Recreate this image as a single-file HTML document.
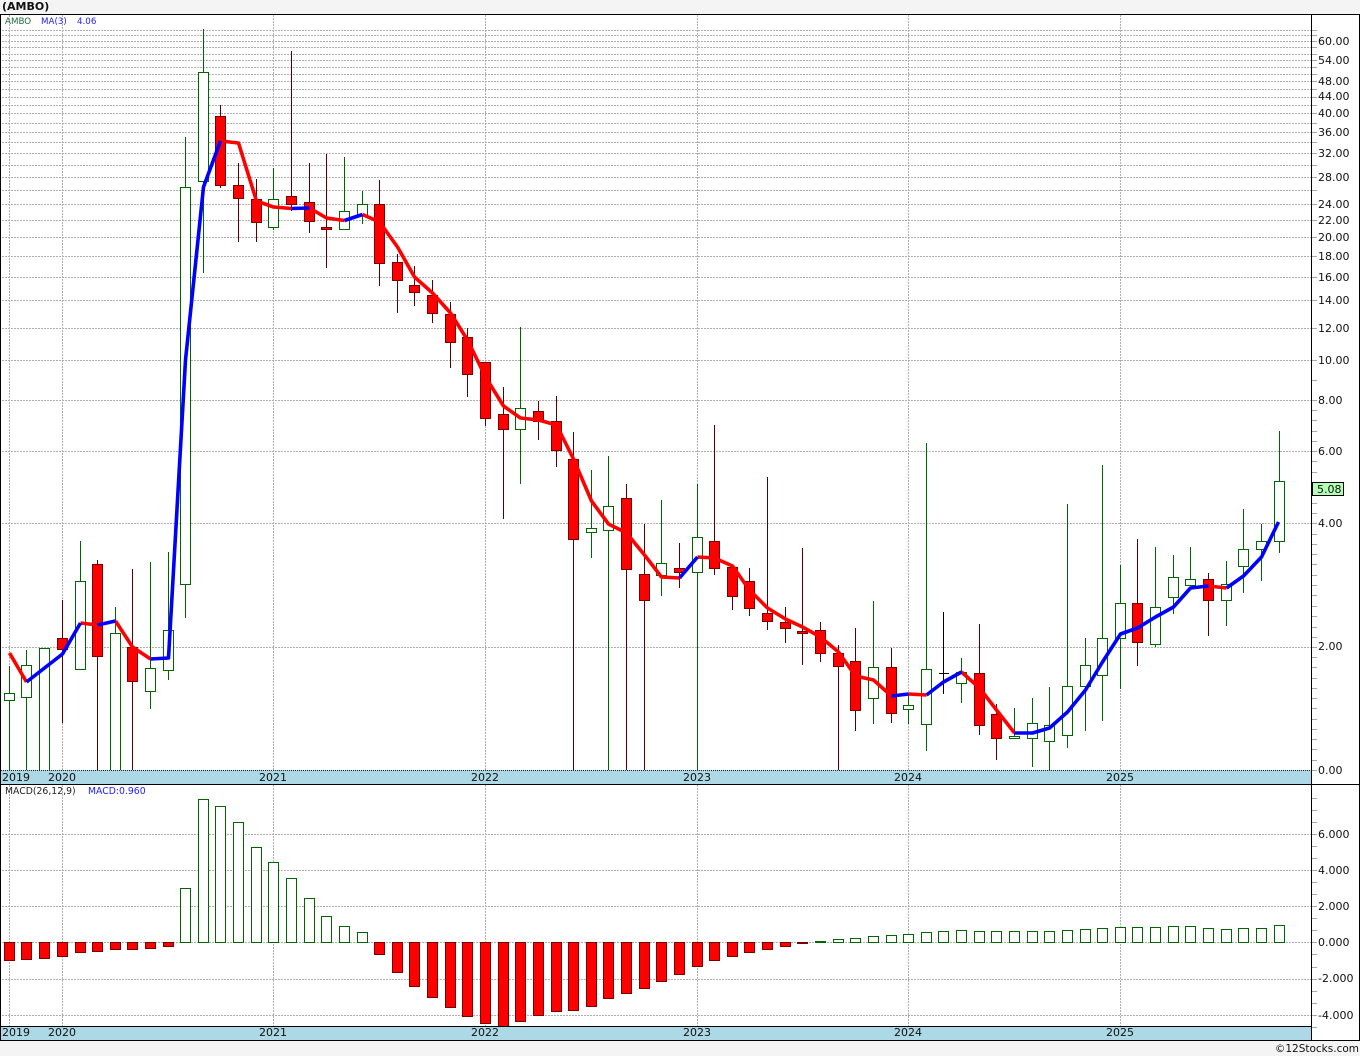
<!DOCTYPE html>
<html lang="en">
<head>
<meta charset="utf-8">
<title>(AMBO)</title>
<style>
html,body{margin:0;padding:0;background:#f4f4f4;width:1360px;height:1056px;overflow:hidden}
svg{display:block}
text{font-family:"DejaVu Sans","Liberation Sans",sans-serif;font-size:11px;fill:#111}
.s{font-size:8.7px}
.m{font-size:9.3px}
</style>
</head>
<body>
<svg width="1360" height="1056" viewBox="0 0 1360 1056" xmlns="http://www.w3.org/2000/svg">
<rect x="0" y="0" width="1360" height="1056" fill="#f4f4f4"/>
<rect x="0" y="14" width="1360" height="1027" fill="#fff"/>
<g shape-rendering="crispEdges" fill="none">
<path stroke="#aeaeae" stroke-dasharray="2 1" d="M2 30.5H1311M2 35.5H1311M2 41.5H1311M2 47.5H1311M2 54.5H1311M2 60.5H1311M2 67.5H1311M2 74.5H1311M2 81.5H1311M2 89.5H1311M2 97.5H1311M2 105.5H1311M2 113.5H1311M2 123.5H1311M2 132.5H1311M2 142.5H1311M2 153.5H1311M2 165.5H1311M2 177.5H1311M2 190.5H1311M2 204.5H1311M2 220.5H1311M2 237.5H1311M2 256.5H1311M2 277.5H1311M2 300.5H1311M2 328.5H1311M2 360.5H1311M2 400.5H1311M2 451.5H1311M2 523.5H1311M2 647.5H1311M2 834.5H1311M2 870.5H1311M2 906.5H1311M2 942.5H1311M2 979.5H1311M2 1015.5H1311M9.5 15V770M62.5 15V770M273.5 15V770M485.5 15V770M697.5 15V770M908.5 15V770M1120.5 15V770M9.5 785V1026M62.5 785V1026M273.5 785V1026M485.5 785V1026M697.5 785V1026M908.5 785V1026M1120.5 785V1026"/>
<path stroke="#a6a6a6" d="M1312 30.5h5M1312 35.5h5M1312 41.5h5M1312 47.5h5M1312 54.5h5M1312 60.5h5M1312 67.5h5M1312 74.5h5M1312 81.5h5M1312 89.5h5M1312 97.5h5M1312 105.5h5M1312 113.5h5M1312 123.5h5M1312 132.5h5M1312 142.5h5M1312 153.5h5M1312 165.5h5M1312 177.5h5M1312 190.5h5M1312 204.5h5M1312 220.5h5M1312 237.5h5M1312 256.5h5M1312 277.5h5M1312 300.5h5M1312 328.5h5M1312 360.5h5M1312 380.5h5M1312 400.5h5M1312 410.5h5M1312 420.5h5M1312 431.5h5M1312 441.5h5M1312 451.5h5M1312 461.5h5M1312 472.5h5M1312 503.5h5M1312 513.5h5M1312 523.5h5M1312 534.5h5M1312 544.5h5M1312 554.5h5M1312 564.5h5M1312 575.5h5M1312 585.5h5M1312 595.5h5M1312 606.5h5M1312 616.5h5M1312 627.5h5M1312 637.5h5M1312 647.5h5M1312 657.5h5M1312 667.5h5M1312 678.5h5M1312 688.5h5M1312 698.5h5M1312 708.5h5M1312 719.5h5M1312 729.5h5M1312 739.5h5M1312 749.5h5M1312 760.5h5M1312 770.5h5M1312 798.5h5M1312 810.5h5M1312 822.5h5M1312 834.5h5M1312 846.5h5M1312 858.5h5M1312 870.5h5M1312 882.5h5M1312 894.5h5M1312 906.5h5M1312 918.5h5M1312 930.5h5M1312 942.5h5M1312 954.5h5M1312 967.5h5M1312 979.5h5M1312 991.5h5M1312 1003.5h5M1312 1015.5h5M1312 1027.5h5"/>
<!-- green wicks -->
<path stroke="#006400" d="M9.5 666V770M26.5 650V770M44.5 648V770M80.5 541V669M115.5 607V770M150.5 562V709M168.5 552V680M185.5 137V618M203.5 29V273M273.5 168V230M344.5 157V229M362.5 191V224M520.5 327V484M591.5 470V558M608.5 456V770M661.5 500V596M697.5 484V770M873.5 601V724M908.5 693V724M926.5 443V751M961.5 658V703M1014.5 708V738M1032.5 698V767M1049.5 687V770M1067.5 504V748M1085.5 638V731M1102.5 465V721M1120.5 565V689M1155.5 547V647M1173.5 555V614M1190.5 547V585M1226.5 561V626M1243.5 509V593M1261.5 524V581M1279.5 431V553"/>
<!-- red wicks -->
<path stroke="#5a0000" d="M62.5 600V723M97.5 560V770M132.5 569V770M220.5 105V188M238.5 163V242M256.5 179V242M291.5 51V211M309.5 163V233M326.5 154V268M379.5 180V286M397.5 254V313M414.5 266V306M432.5 280V323M450.5 302V368M467.5 328V397M485.5 362V426M503.5 387V519M538.5 401V440M556.5 396V467M573.5 432V770M626.5 484V770M644.5 524V770M679.5 543V588M714.5 425V575M732.5 567V610M749.5 568V616M767.5 477V630M785.5 607V643M802.5 548V665M820.5 622V662M838.5 645V770M855.5 628V731M891.5 648V723M979.5 624V735M996.5 704V760M1137.5 539V666M1208.5 573V636"/>
<path stroke="#000" d="M943.5 612V694M939 673.5h10"/>
<!-- green bodies -->
<path stroke="#006400" fill="#fff" d="M4.5 693.5h10v7h-10zM21.5 665.5h10v32h-10zM39.5 648.5h10v130h-10zM75.5 581.5h10v88h-10zM110.5 633.5h10v145h-10zM145.5 668.5h10v23h-10zM163.5 630.5h10v40h-10zM180.5 187.5h10v397h-10zM198.5 72.5h10v109h-10zM268.5 199.5h10v28h-10zM339.5 211.5h10v18h-10zM357.5 204.5h10v11h-10zM515.5 408.5h10v21h-10zM586.5 528.5h10v4h-10zM603.5 506.5h10v24h-10zM656.5 563.5h10v12h-10zM692.5 537.5h10v35h-10zM868.5 667.5h10v31h-10zM903.5 705.5h10v4h-10zM921.5 669.5h10v55h-10zM956.5 672.5h10v11h-10zM1009.5 736.5h10v2h-10zM1027.5 723.5h10v15h-10zM1044.5 725.5h10v16h-10zM1062.5 686.5h10v49h-10zM1080.5 665.5h10v21h-10zM1097.5 638.5h10v37h-10zM1115.5 603.5h10v35h-10zM1150.5 607.5h10v37h-10zM1168.5 577.5h10v20h-10zM1185.5 579.5h10v6h-10zM1221.5 584.5h10v16h-10zM1238.5 549.5h10v17h-10zM1256.5 541.5h10v8h-10zM1274.5 481.5h10v60h-10z"/>
<!-- red bodies -->
<path stroke="#7a0000" fill="#f00" d="M57.5 638.5h10v11h-10zM92.5 564.5h10v92h-10zM127.5 647.5h10v34h-10zM215.5 116.5h10v69h-10zM233.5 185.5h10v13h-10zM251.5 199.5h10v23h-10zM286.5 196.5h10v8h-10zM304.5 202.5h10v19h-10zM321.5 227.5h10v2h-10zM374.5 204.5h10v59h-10zM392.5 262.5h10v18h-10zM409.5 285.5h10v7h-10zM427.5 295.5h10v18h-10zM445.5 314.5h10v28h-10zM462.5 337.5h10v37h-10zM480.5 362.5h10v56h-10zM498.5 414.5h10v15h-10zM533.5 411.5h10v10h-10zM551.5 421.5h10v29h-10zM568.5 459.5h10v80h-10zM621.5 498.5h10v71h-10zM639.5 574.5h10v26h-10zM674.5 568.5h10v4h-10zM709.5 541.5h10v27h-10zM727.5 567.5h10v29h-10zM744.5 581.5h10v27h-10zM762.5 613.5h10v8h-10zM780.5 622.5h10v6h-10zM797.5 631.5h10v2h-10zM815.5 630.5h10v23h-10zM833.5 653.5h10v13h-10zM850.5 661.5h10v49h-10zM886.5 667.5h10v46h-10zM974.5 673.5h10v52h-10zM991.5 714.5h10v24h-10zM1132.5 603.5h10v39h-10zM1203.5 579.5h10v21h-10z"/>
<!-- MACD green -->
<path stroke="#006400" fill="#fff" d="M180.5 888.5h10v54h-10zM198.5 799.5h10v143h-10zM215.5 806.5h10v136h-10zM233.5 822.5h10v120h-10zM251.5 847.5h10v95h-10zM268.5 862.5h10v80h-10zM286.5 878.5h10v64h-10zM304.5 898.5h10v44h-10zM321.5 916.5h10v26h-10zM339.5 926.5h10v16h-10zM357.5 932.5h10v10h-10zM815.5 941.5h10v1h-10zM833.5 939.5h10v3h-10zM850.5 938.5h10v4h-10zM868.5 936.5h10v6h-10zM886.5 935.5h10v7h-10zM903.5 934.5h10v8h-10zM921.5 932.5h10v10h-10zM938.5 931.5h10v11h-10zM956.5 930.5h10v12h-10zM974.5 931.5h10v11h-10zM991.5 931.5h10v11h-10zM1009.5 931.5h10v11h-10zM1027.5 931.5h10v11h-10zM1044.5 931.5h10v11h-10zM1062.5 930.5h10v12h-10zM1080.5 929.5h10v13h-10zM1097.5 928.5h10v14h-10zM1115.5 927.5h10v15h-10zM1132.5 927.5h10v15h-10zM1150.5 927.5h10v15h-10zM1168.5 926.5h10v16h-10zM1185.5 926.5h10v16h-10zM1203.5 928.5h10v14h-10zM1221.5 929.5h10v13h-10zM1238.5 928.5h10v14h-10zM1256.5 928.5h10v14h-10zM1274.5 925.5h10v17h-10z"/>
<!-- MACD red -->
<path stroke="#7a0000" fill="#f00" d="M4.5 942.5h10v18h-10zM21.5 942.5h10v17h-10zM39.5 942.5h10v16h-10zM57.5 942.5h10v14h-10zM75.5 942.5h10v10h-10zM92.5 942.5h10v9h-10zM110.5 942.5h10v7h-10zM127.5 942.5h10v7h-10zM145.5 942.5h10v6h-10zM163.5 942.5h10v4h-10zM374.5 942.5h10v12h-10zM392.5 942.5h10v30h-10zM409.5 942.5h10v44h-10zM427.5 942.5h10v55h-10zM445.5 942.5h10v65h-10zM462.5 942.5h10v74h-10zM480.5 942.5h10v81h-10zM498.5 942.5h10v85h-10zM515.5 942.5h10v79h-10zM533.5 942.5h10v73h-10zM551.5 942.5h10v69h-10zM568.5 942.5h10v68h-10zM586.5 942.5h10v64h-10zM603.5 942.5h10v56h-10zM621.5 942.5h10v51h-10zM639.5 942.5h10v46h-10zM656.5 942.5h10v39h-10zM674.5 942.5h10v32h-10zM692.5 942.5h10v24h-10zM709.5 942.5h10v18h-10zM727.5 942.5h10v14h-10zM744.5 942.5h10v10h-10zM762.5 942.5h10v7h-10zM780.5 942.5h10v4h-10zM797.5 942.5h10v1h-10z"/>
</g>
<!-- MA(3) line -->
<g fill="none" stroke-width="3.6" stroke-linejoin="round" stroke-linecap="butt">
<g stroke="#f00">
<polyline points="9.5,653 26.5,682"/>
<polyline points="80.5,623 97.5,625"/>
<polyline points="115.5,621 132.5,647 150.5,659"/>
<polyline points="220.5,141 238.5,143 256.5,201 273.5,207 291.5,208.5"/>
<polyline points="309.5,208 326.5,218 344.5,220.5"/>
<polyline points="362.5,214.5 379.5,222 397.5,247 414.5,277 432.5,293 450.5,313 467.5,340 485.5,377 503.5,406 520.5,418 538.5,420 556.5,425 573.5,459 591.5,501 608.5,524 626.5,533 644.5,555 661.5,577 679.5,578"/>
<polyline points="697.5,557 714.5,558 732.5,566 749.5,590 767.5,608 785.5,619 802.5,627 820.5,637 838.5,652 855.5,676 873.5,680 891.5,696"/>
<polyline points="908.5,694 926.5,695"/>
<polyline points="961.5,672 979.5,688 996.5,710 1014.5,733"/>
<polyline points="1208.5,586 1226.5,588"/>
</g>
<g stroke="#00f">
<polyline points="26.5,682 44.5,668 62.5,654 80.5,623"/>
<polyline points="97.5,625 115.5,621"/>
<polyline points="150.5,659 168.5,658 185.5,360 203.5,187 220.5,141"/>
<polyline points="291.5,208.5 309.5,208"/>
<polyline points="344.5,220.5 362.5,214.5"/>
<polyline points="679.5,578 697.5,557"/>
<polyline points="891.5,696 908.5,694"/>
<polyline points="926.5,695 943.5,682 961.5,672"/>
<polyline points="1014.5,733 1032.5,733 1049.5,728 1067.5,712 1085.5,690 1102.5,662 1120.5,634 1137.5,628 1155.5,617 1173.5,607 1190.5,588 1208.5,586"/>
<polyline points="1226.5,588 1243.5,576 1261.5,557 1278.5,522"/>
</g>
</g>
<!-- date bars and frame -->
<g shape-rendering="crispEdges">
<rect x="1" y="770" width="1310" height="14" fill="#add8e6"/>
<rect x="1" y="1026" width="1310" height="14" fill="#add8e6"/>
<path stroke="#222" stroke-dasharray="1 1" fill="none" d="M1 770.5H1311"/>
<rect x="0" y="14" width="1360" height="1" fill="#000"/>
<rect x="0" y="14" width="1" height="1027" fill="#000"/>
<rect x="1359" y="14" width="1" height="1027" fill="#000"/>
<rect x="1311" y="14" width="1" height="1027" fill="#000"/>
<rect x="0" y="784" width="1360" height="1" fill="#000"/>
<rect x="0" y="1026" width="1312" height="1" fill="#000"/>
<rect x="0" y="1040" width="1360" height="1" fill="#000"/>
<rect x="1312.5" y="482.5" width="31" height="13" fill="#b4ffb4" stroke="#000"/>
</g>
<!-- text -->
<text x="2" y="10" style="font-weight:bold;font-size:11px">(AMBO)</text>
<text class="s" x="5" y="24" style="fill:#1e6b3c">AMBO</text>
<text class="s" x="41" y="24" style="fill:#2020ff">MA(3)</text>
<text class="s" x="77" y="24" style="fill:#2020ff">4.06</text>
<text class="m" x="5" y="794" style="fill:#222">MACD(26,12,9)</text>
<text class="m" x="88" y="794" style="fill:#2020ff">MACD:0.960</text>

<text x="1318" y="45">60.00</text>
<text x="1318" y="64">54.00</text>
<text x="1318" y="85">48.00</text>
<text x="1318" y="100">44.00</text>
<text x="1318" y="117">40.00</text>
<text x="1318" y="136">36.00</text>
<text x="1318" y="157">32.00</text>
<text x="1318" y="181">28.00</text>
<text x="1318" y="208">24.00</text>
<text x="1318" y="224">22.00</text>
<text x="1318" y="241">20.00</text>
<text x="1318" y="260">18.00</text>
<text x="1318" y="281">16.00</text>
<text x="1318" y="304">14.00</text>
<text x="1318" y="332">12.00</text>
<text x="1318" y="364">10.00</text>
<text x="1318" y="404">8.00</text>
<text x="1318" y="455">6.00</text>
<text x="1317" y="493">5.08</text>
<text x="1318" y="527">4.00</text>
<text x="1318" y="650">2.00</text>
<text x="1318" y="774">0.00</text>

<text x="1318" y="838">6.000</text>
<text x="1318" y="874">4.000</text>
<text x="1318" y="910">2.000</text>
<text x="1318" y="946">0.000</text>
<text x="1318" y="982">-2.000</text>
<text x="1318" y="1019">-4.000</text>

<text x="2" y="781">2019</text>
<text x="48" y="781">2020</text>
<text x="259" y="781">2021</text>
<text x="471" y="781">2022</text>
<text x="683" y="781">2023</text>
<text x="894" y="781">2024</text>
<text x="1106" y="781">2025</text>

<text x="2" y="1036">2019</text>
<text x="48" y="1036">2020</text>
<text x="259" y="1036">2021</text>
<text x="471" y="1036">2022</text>
<text x="683" y="1036">2023</text>
<text x="894" y="1036">2024</text>
<text x="1106" y="1036">2025</text>

<text x="1359" y="1052" text-anchor="end" style="font-size:10.5px">©12Stocks.com</text>
</svg>
</body>
</html>
